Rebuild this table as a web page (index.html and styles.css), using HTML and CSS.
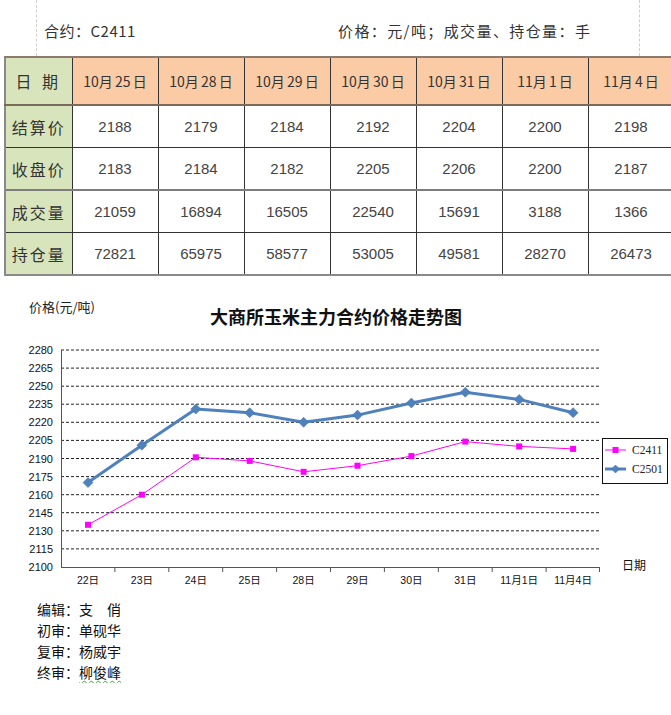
FILE: index.html
```html
<!DOCTYPE html>
<html lang="zh">
<head>
<meta charset="utf-8">
<title>大商所玉米主力合约价格走势图</title>
<link rel="stylesheet" href="styles.css">
</head>
<body>
<div class="top">
  <span class="contract">合约：C2411</span>
  <span class="unit">价格：元/吨；成交量、持仓量：手</span>
</div>
<table class="data">
  <colgroup>
    <col class="c0"><col class="c1"><col class="c1"><col class="c1"><col class="c1"><col class="c1"><col class="c1"><col class="c1">
  </colgroup>
  <thead>
    <tr>
      <th class="rowhead">日 期</th>
      <th>10月 25 日</th><th>10月 28 日</th><th>10月 29 日</th><th>10月 30 日</th><th>10月 31 日</th><th>11月 1 日</th><th>11月 4 日</th>
    </tr>
  </thead>
  <tbody>
    <tr><th class="rowhead">结算价</th><td>2188</td><td>2179</td><td>2184</td><td>2192</td><td>2204</td><td>2200</td><td>2198</td></tr>
    <tr><th class="rowhead">收盘价</th><td>2183</td><td>2184</td><td>2182</td><td>2205</td><td>2206</td><td>2200</td><td>2187</td></tr>
    <tr class="sep"><th class="rowhead">成交量</th><td>21059</td><td>16894</td><td>16505</td><td>22540</td><td>15691</td><td>3188</td><td>1366</td></tr>
    <tr class="last"><th class="rowhead">持仓量</th><td>72821</td><td>65975</td><td>58577</td><td>53005</td><td>49581</td><td>28270</td><td>26473</td></tr>
  </tbody>
</table>

<svg class="chart" width="671" height="310" viewBox="0 0 671 310" xmlns="http://www.w3.org/2000/svg">
  <text class="ylabel-title" x="29" y="26">价格(元/吨)</text>
  <text class="title" x="336" y="38" text-anchor="middle">大商所玉米主力合约价格走势图</text>

  <g class="grid">
    <line x1="61" y1="64" x2="599" y2="64"/>
    <line x1="61" y1="82.1" x2="599" y2="82.1"/>
    <line x1="61" y1="100.2" x2="599" y2="100.2"/>
    <line x1="61" y1="118.2" x2="599" y2="118.2"/>
    <line x1="61" y1="136.3" x2="599" y2="136.3"/>
    <line x1="61" y1="154.4" x2="599" y2="154.4"/>
    <line x1="61" y1="172.5" x2="599" y2="172.5"/>
    <line x1="61" y1="190.6" x2="599" y2="190.6"/>
    <line x1="61" y1="208.7" x2="599" y2="208.7"/>
    <line x1="61" y1="226.7" x2="599" y2="226.7"/>
    <line x1="61" y1="244.8" x2="599" y2="244.8"/>
    <line x1="61" y1="262.9" x2="599" y2="262.9"/>
  </g>

  <g class="axis">
    <line x1="61.5" y1="64" x2="61.5" y2="281"/>
    <line x1="61" y1="281.5" x2="600" y2="281.5"/>
    <line x1="114.9" y1="281" x2="114.9" y2="286"/>
    <line x1="168.8" y1="281" x2="168.8" y2="286"/>
    <line x1="222.7" y1="281" x2="222.7" y2="286"/>
    <line x1="276.6" y1="281" x2="276.6" y2="286"/>
    <line x1="330.5" y1="281" x2="330.5" y2="286"/>
    <line x1="384.4" y1="281" x2="384.4" y2="286"/>
    <line x1="438.3" y1="281" x2="438.3" y2="286"/>
    <line x1="492.2" y1="281" x2="492.2" y2="286"/>
    <line x1="546.1" y1="281" x2="546.1" y2="286"/>
    <line x1="599.5" y1="281" x2="599.5" y2="286"/>
  </g>

  <g class="yticks" text-anchor="end">
    <text x="53" y="68">2280</text>
    <text x="53" y="86.1">2265</text>
    <text x="53" y="104.2">2250</text>
    <text x="53" y="122.2">2235</text>
    <text x="53" y="140.3">2220</text>
    <text x="53" y="158.4">2205</text>
    <text x="53" y="176.5">2190</text>
    <text x="53" y="194.6">2175</text>
    <text x="53" y="212.7">2160</text>
    <text x="53" y="230.7">2145</text>
    <text x="53" y="248.8">2130</text>
    <text x="53" y="266.9">2115</text>
    <text x="53" y="285">2100</text>
  </g>

  <g class="xticks" text-anchor="middle">
    <text x="88" y="298">22日</text>
    <text x="141.9" y="298">23日</text>
    <text x="195.8" y="298">24日</text>
    <text x="249.7" y="298">25日</text>
    <text x="303.6" y="298">28日</text>
    <text x="357.5" y="298">29日</text>
    <text x="411.4" y="298">30日</text>
    <text x="465.3" y="298">31日</text>
    <text x="519.2" y="298">11月1日</text>
    <text x="573.1" y="298">11月4日</text>
  </g>
  <text class="xtitle" x="622" y="284">日期</text>

  <polyline class="s-blue" points="88,196.6 141.9,159.2 195.8,123.1 249.7,126.7 303.6,136.3 357.5,129.1 411.4,117 465.3,106.2 519.2,113.4 573.1,126.7"/>
  <g class="m-blue">
    <path d="M88 191.6 L93 196.6 L88 201.6 L83 196.6 Z"/>
    <path d="M141.9 154.2 L146.9 159.2 L141.9 164.2 L136.9 159.2 Z"/>
    <path d="M195.8 118.1 L200.8 123.1 L195.8 128.1 L190.8 123.1 Z"/>
    <path d="M249.7 121.7 L254.7 126.7 L249.7 131.7 L244.7 126.7 Z"/>
    <path d="M303.6 131.3 L308.6 136.3 L303.6 141.3 L298.6 136.3 Z"/>
    <path d="M357.5 124.1 L362.5 129.1 L357.5 134.1 L352.5 129.1 Z"/>
    <path d="M411.4 112 L416.4 117 L411.4 122 L406.4 117 Z"/>
    <path d="M465.3 101.2 L470.3 106.2 L465.3 111.2 L460.3 106.2 Z"/>
    <path d="M519.2 108.4 L524.2 113.4 L519.2 118.4 L514.2 113.4 Z"/>
    <path d="M573.1 121.7 L578.1 126.7 L573.1 131.7 L568.1 126.7 Z"/>
  </g>

  <polyline class="s-pink" points="88,238.8 141.9,208.7 195.8,171.3 249.7,174.9 303.6,185.8 357.5,179.7 411.4,170.1 465.3,155.6 519.2,160.4 573.1,162.9"/>
  <g class="m-pink">
    <rect x="85" y="235.8" width="6" height="6"/>
    <rect x="138.9" y="205.7" width="6" height="6"/>
    <rect x="192.8" y="168.3" width="6" height="6"/>
    <rect x="246.7" y="171.9" width="6" height="6"/>
    <rect x="300.6" y="182.8" width="6" height="6"/>
    <rect x="354.5" y="176.7" width="6" height="6"/>
    <rect x="408.4" y="167.1" width="6" height="6"/>
    <rect x="462.3" y="152.6" width="6" height="6"/>
    <rect x="516.2" y="157.4" width="6" height="6"/>
    <rect x="570.1" y="159.9" width="6" height="6"/>
  </g>

  <g class="legend">
    <rect class="legend-box" x="602.5" y="152.5" width="65" height="45"/>
    <line class="s-pink" x1="605" y1="164" x2="626" y2="164"/>
    <rect class="m-pink" x="612.5" y="161" width="6" height="6"/>
    <text x="632" y="168">C2411</text>
    <line class="s-blue" x1="605" y1="183" x2="626" y2="183"/>
    <path class="m-blue" d="M615.5 179 L619.5 183 L615.5 187 L611.5 183 Z"/>
    <text x="632" y="187">C2501</text>
  </g>
</svg>

<div class="credits">
  <p>编辑：支　俏</p>
  <p>初审：单砚华</p>
  <p>复审：杨威宇</p>
  <p>终审：<span class="squiggle">柳俊峰</span></p>
</div>
</body>
</html>
```

FILE: styles.css
```css
html, body {
  margin: 0;
  padding: 0;
  background: #ffffff;
}

body {
  width: 671px;
  overflow: hidden;
  font-family: "Noto Sans CJK SC", "Liberation Sans", sans-serif;
  color: #222;
}

.top {
  box-sizing: border-box;
  margin-left: 36px;
  width: 604px;
  height: 56px;
  border-left: 1px dashed #cfcfcf;
  border-right: 1px dashed #cfcfcf;
  display: flex;
  align-items: center;
  padding-top: 4px;
  font-size: 15px;
  color: #333;
}

.contract {
  margin-left: 7px;
  width: 294px;
  letter-spacing: 0.5px;
}

.unit {
  letter-spacing: 1.4px;
}

.data {
  margin-left: 4px;
  width: 667px;
  border-collapse: collapse;
  table-layout: fixed;
  font-size: 14px;
  color: #333;
  border-left: 2px solid #8a8a8a;
  border-bottom: 2px solid #8a8a8a;
  border-top: 2px solid #8c7a6a;
}

.c0 { width: 67px; }
.c1 { width: 86px; }

.data th,
.data td {
  border: 1px solid #333;
  text-align: center;
  padding: 0;
  font-weight: normal;
}

.data thead th {
  height: 46px;
  background: #fbcba6;
  border-bottom: 2px solid #7a6a5a;
  font-size: 14px;
  word-spacing: -1px;
}

.data thead th.rowhead {
  letter-spacing: 4px;
}

.data tbody td,
.data tbody th {
  height: 41px;
}

.data tbody td {
  font-family: "Liberation Sans", "Noto Sans CJK SC", sans-serif;
  font-size: 15px;
  color: #444;
}

.data .rowhead {
  background: #d8e4bc;
  font-size: 16px;
  letter-spacing: 2px;
  color: #333;
}

.data tbody th.rowhead {
  border-left: 2px solid #8a8a8a;
}

.data tr.sep td,
.data tr.sep th {
  border-top: 2px solid #7d7d7d;
}

.chart {
  display: block;
  margin-top: 10px;
  font-family: "Noto Sans CJK SC", "Liberation Sans", sans-serif;
}

.ylabel-title {
  font-size: 13px;
  fill: #222;
}

.title {
  font-size: 18px;
  font-weight: 700;
  fill: #111;
}

.grid line {
  stroke: #222;
  stroke-width: 1;
  stroke-dasharray: 3 2;
}

.axis line {
  stroke: #555;
  stroke-width: 1;
}

.yticks text,
.xticks text {
  font-family: "Liberation Sans", "Noto Sans CJK SC", sans-serif;
  font-size: 11px;
  fill: #111;
}

.xticks text {
  font-size: 10.5px;
}

.xtitle {
  font-size: 12px;
  fill: #111;
}

.s-blue {
  fill: none;
  stroke: #4f81bd;
  stroke-width: 3;
  stroke-linejoin: round;
}

.m-blue,
.m-blue path {
  fill: #4f81bd;
  stroke: #3f6fa8;
  stroke-width: 0.5;
}

.s-pink {
  fill: none;
  stroke: #ff00ff;
  stroke-width: 1;
}

.m-pink,
.m-pink rect {
  fill: #ff00ff;
  stroke: none;
}

.legend-box {
  fill: #ffffff;
  stroke: #111;
  stroke-width: 1;
}

.legend text {
  font-family: "Liberation Serif", "Noto Sans CJK SC", serif;
  font-size: 11.5px;
  fill: #222;
}

.credits {
  margin-left: 37px;
  padding-top: 3px;
  font-size: 14px;
  line-height: 21px;
  color: #111;
}

.credits p {
  margin: 0;
}

.squiggle {
  text-decoration: underline wavy #3aa83a;
  text-decoration-thickness: 1px;
  text-underline-offset: 2px;
}
```
